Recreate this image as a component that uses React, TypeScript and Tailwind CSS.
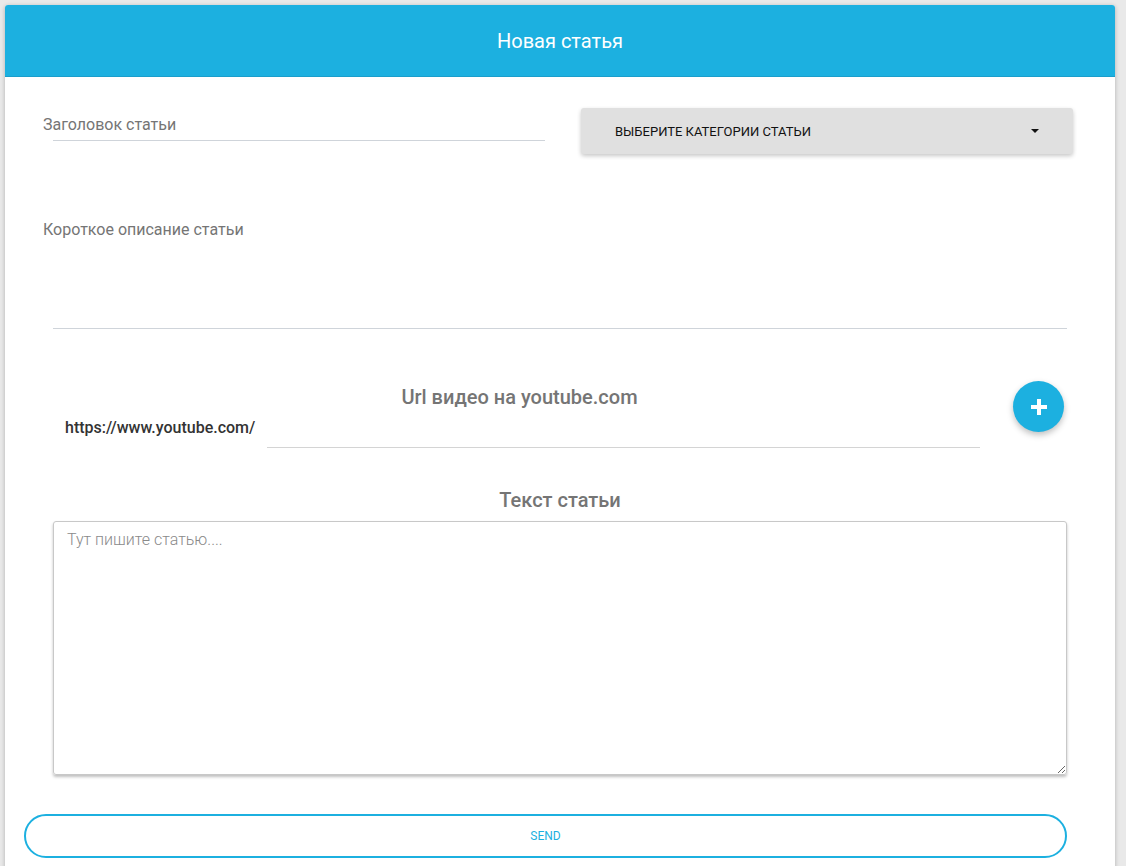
export default function App() {
  return (
    <div className="min-h-[866px] bg-[#e9e9e9] px-[5px] pt-[5px] font-['Roboto',sans-serif] overflow-hidden">
      <div className="w-[1110px] h-[900px] bg-white rounded-t-[3px] shadow-[0_1px_4px_rgba(0,0,0,0.25)]">
        {/* Header */}
        <div className="h-[72px] bg-[#1cb0e0] rounded-t-[3px] border-b border-[#1a9ecb] flex items-center justify-center">
          <span className="text-white text-[20px] mt-[1px]">Новая статья</span>
        </div>

        {/* Title + categories */}
        <div className="flex pt-[31px] pl-[38px]">
          <div className="w-[502px] pt-[7px]">
            <div className="text-[16px] text-[#757575] leading-[19px]">Заголовок статьи</div>
            <div className="ml-[10px] mt-[6px] h-px bg-[#cfd4da]" />
          </div>
          <button className="ml-[36px] w-[492px] h-[46px] bg-[#e0e0e0] rounded-[3px] shadow-[0_2px_4px_rgba(0,0,0,0.22)] flex items-center justify-between pl-[34px] pr-[34px]">
            <span className="text-[13px] text-[#111] mt-[1px]">ВЫБЕРИТЕ КАТЕГОРИИ СТАТЬИ</span>
            <svg width="8" height="4" viewBox="0 0 8 4">
              <path d="M0 0h8L4 4z" fill="#111" />
            </svg>
          </button>
        </div>

        {/* Short description */}
        <div className="pt-[66px] pl-[38px] pr-[48px]">
          <div className="text-[16px] text-[#757575] leading-[19px]">Короткое описание статьи</div>
          <div className="ml-[10px] mt-[89px] h-px bg-[#cfd4da]" />
        </div>

        {/* Youtube url */}
        <div className="flex pt-[56px] pl-[60px]">
          <div className="w-[915px] flex flex-col">
            <div className="text-center text-[20px] font-medium text-[#757575] leading-[24px] pr-[6px]">
              Url видео на youtube.com
            </div>
            <div className="flex items-end mt-[9px]">
              <span className="text-[16px] font-medium text-[#333] leading-[19px] mb-[11px]">https://www.youtube.com/</span>
              <div className="ml-[12px] flex-1 h-px bg-[#d4d4d4]" />
            </div>
          </div>
          <button className="ml-[33px] mt-[-4px] w-[51px] h-[51px] rounded-full bg-[#1cb0e0] shadow-[0_3px_6px_rgba(0,0,0,0.25)] flex items-center justify-center">
            <svg width="16" height="16" viewBox="0 0 16 16">
              <path d="M6 0h4v6h6v4h-6v6H6v-6H0V6h6z" fill="#fff" />
            </svg>
          </button>
        </div>

        {/* Article text */}
        <div className="pt-[40px] pl-[48px] pr-[48px]">
          <div className="text-center text-[20px] font-medium text-[#757575] leading-[24px]">Текст статьи</div>
          <textarea
            className="mt-[9px] block w-full h-[254px] border border-[#c8c8c8] rounded-[3px] shadow-[0_2px_3px_rgba(0,0,0,0.25)] px-[13px] py-[6px] text-[16px] text-[#333] placeholder:text-[#8a8a8a] font-light outline-none"
            placeholder="Тут пишите статью...."
          />
        </div>

        {/* Send */}
        <div className="pt-[39px] pl-[19px] pr-[48px]">
          <button className="w-full h-[44px] border-2 border-[#1cb0e0] rounded-[22px] text-[12px] text-[#1cb0e0]">
            SEND
          </button>
        </div>
      </div>
    </div>
  )
}
